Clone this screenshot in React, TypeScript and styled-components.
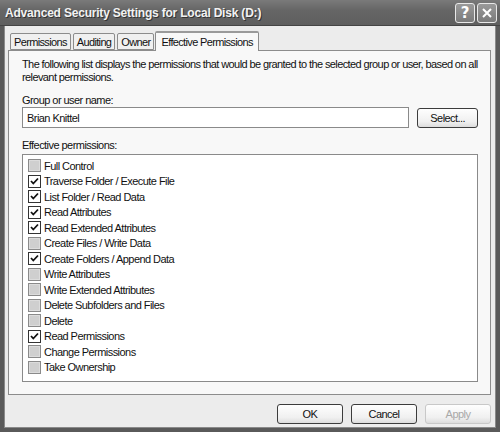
import React from "react";
import styled, { createGlobalStyle } from "styled-components";

const Global = createGlobalStyle`
  html, body { margin: 0; padding: 0; background: #ececec; }
  * { box-sizing: border-box; }
`;

const Window = styled.div`
  width: 500px;
  height: 432px;
  background: #ececec;
  display: flex;
  flex-direction: column;
  border: 4px solid #5a5a5a;
  border-top: none;
  box-shadow: inset 1px 0 0 #8a8a8a, inset -1px 0 0 #8a8a8a, inset 0 -1px 0 #8a8a8a;
  font-family: "Liberation Sans", Arial, sans-serif;
  font-size: 11px;
  letter-spacing: -0.55px;
  color: #111;
`;

const TitleBar = styled.div`
  height: 26px;
  margin: 0 -4px;
  padding: 0 3px 0 5px;
  display: flex;
  align-items: center;
  background: linear-gradient(#7a7a7a, #666 40%, #5e5e5e);
  border-bottom: 1px solid #444;
`;

const Title = styled.div`
  flex: 1;
  color: #f2f2f2;
  font-weight: bold;
  font-size: 12px;
  letter-spacing: -0.2px;
  text-shadow: 1px 1px 0 #333;
`;

const CaptionButton = styled.div`
  width: 20px;
  height: 20px;
  margin-left: 2px;
  border: 1px solid #e8e8e8;
  border-radius: 3px;
  background: linear-gradient(#9a9a9a, #7a7a7a);
  display: flex;
  align-items: center;
  justify-content: center;
  color: #fff;
  font-weight: bold;
  font-size: 15px;
  letter-spacing: 0;
  font-family: "DejaVu Sans", sans-serif;
`;

const Body = styled.div`
  flex: 1;
  display: flex;
  flex-direction: column;
  padding: 4px 5px 0 4px;
`;

const TabRow = styled.div`
  display: flex;
  align-items: flex-end;
  height: 20px;
  padding-left: 2px;
  position: relative;
  z-index: 1;
  letter-spacing: -0.65px;
`;

const Tab = styled.div<{ $active?: boolean }>`
  height: ${(p) => (p.$active ? 20 : 17)}px;
  padding: 0 ${(p) => (p.$active ? 5 : 3)}px;
  margin-right: ${(p) => (p.$active ? 0 : 2)}px;
  margin-left: ${(p) => (p.$active ? -1 : 0)}px;
  margin-bottom: ${(p) => (p.$active ? -1 : 0)}px;
  display: flex;
  align-items: center;
  background: ${(p) => (p.$active ? "#f8f8f8" : "#f0f0f0")};
  border: 1px solid #8c8c8c;
  border-bottom: ${(p) => (p.$active ? "none" : "1px solid #8c8c8c")};
  border-radius: 2px 2px 0 0;
  ${(p) => (p.$active ? "border-top: 2px solid #9a9a9a;" : "")}
`;

const Panel = styled.div`
  height: 345px;
  background: #f8f8f8;
  border: 1px solid #8c8c8c;
  padding: 7px 12px 0 13px;
  display: flex;
  flex-direction: column;
`;

const Desc = styled.div`
  line-height: 13px;
  letter-spacing: -0.6px;
`;

const Label = styled.div<{ $mt: number }>`
  margin-top: ${(p) => p.$mt}px;
  line-height: 13px;
`;

const InputRow = styled.div`
  display: flex;
  align-items: center;
`;

const Input = styled.div`
  width: 390px;
  height: 21px;
  background: #fff;
  border: 1px solid #8a8a8a;
  padding: 0 4px;
  display: flex;
  align-items: center;
`;

const Button = styled.div<{ $disabled?: boolean }>`
  width: 66px;
  height: 20px;
  border: 1px solid ${(p) => (p.$disabled ? "#c8c8c8" : "#3c3c3c")};
  border-radius: 3px;
  background: linear-gradient(#fefefe, #f0f0f0 70%, #dcdcdc);
  display: flex;
  align-items: center;
  justify-content: center;
  color: ${(p) => (p.$disabled ? "#a8a8a8" : "#111")};
`;

const SelectButton = styled(Button)`
  margin-left: 8px;
  width: 61px;
`;

const ListBox = styled.div`
  margin-top: 2px;
  height: 228px;
  background: #fff;
  border: 1px solid #8a8a8a;
  padding: 3px 5px;
  display: flex;
  flex-direction: column;
`;

const Item = styled.div`
  height: 15.5px;
  display: flex;
  align-items: center;
  gap: 3px;
`;

const Box = styled.div<{ $checked: boolean }>`
  width: 13px;
  height: 13px;
  border: 1px solid ${(p) => (p.$checked ? "#333" : "#8a8a8a")};
  background: ${(p) => (p.$checked ? "#fff" : "#cfcfcf")};
  box-shadow: ${(p) => (p.$checked ? "none" : "inset 0 0 0 1px #dcdcdc")};
  display: flex;
  align-items: center;
  justify-content: center;
`;

const Footer = styled.div`
  display: flex;
  justify-content: flex-end;
  gap: 8px;
  padding-top: 9px;
`;

const perms: [string, boolean][] = [
  ["Full Control", false],
  ["Traverse Folder / Execute File", true],
  ["List Folder / Read Data", true],
  ["Read Attributes", true],
  ["Read Extended Attributes", true],
  ["Create Files / Write Data", false],
  ["Create Folders / Append Data", true],
  ["Write Attributes", false],
  ["Write Extended Attributes", false],
  ["Delete Subfolders and Files", false],
  ["Delete", false],
  ["Read Permissions", true],
  ["Change Permissions", false],
  ["Take Ownership", false],
];

const Check = () => (
  <svg width="9" height="9" viewBox="0 0 9 9">
    <path d="M1 4 L3.3 6.5 L8 1.5" fill="none" stroke="#111" strokeWidth="1.8" />
  </svg>
);

export default function App() {
  return (
    <>
      <Global />
      <Window>
        <TitleBar>
          <Title>Advanced Security Settings for Local Disk (D:)</Title>
          <CaptionButton>?</CaptionButton>
          <CaptionButton>
            <svg width="12" height="12" viewBox="0 0 12 12">
              <path d="M2 2 L10 10 M10 2 L2 10" stroke="#fff" strokeWidth="2" />
            </svg>
          </CaptionButton>
        </TitleBar>
        <Body>
          <TabRow>
            <Tab>Permissions</Tab>
            <Tab>Auditing</Tab>
            <Tab>Owner</Tab>
            <Tab $active>Effective Permissions</Tab>
          </TabRow>
          <Panel>
            <Desc>
              The following list displays the permissions that would be granted to the selected group or user, based on all relevant permissions.
            </Desc>
            <Label $mt={10}>Group or user name:</Label>
            <InputRow>
              <Input>Brian Knittel</Input>
              <SelectButton>Select...</SelectButton>
            </InputRow>
            <Label $mt={11}>Effective permissions:</Label>
            <ListBox>
              {perms.map(([name, checked]) => (
                <Item key={name}>
                  <Box $checked={checked}>{checked && <Check />}</Box>
                  <span>{name}</span>
                </Item>
              ))}
            </ListBox>
          </Panel>
          <Footer>
            <Button>OK</Button>
            <Button>Cancel</Button>
            <Button $disabled>Apply</Button>
          </Footer>
        </Body>
      </Window>
    </>
  );
}
